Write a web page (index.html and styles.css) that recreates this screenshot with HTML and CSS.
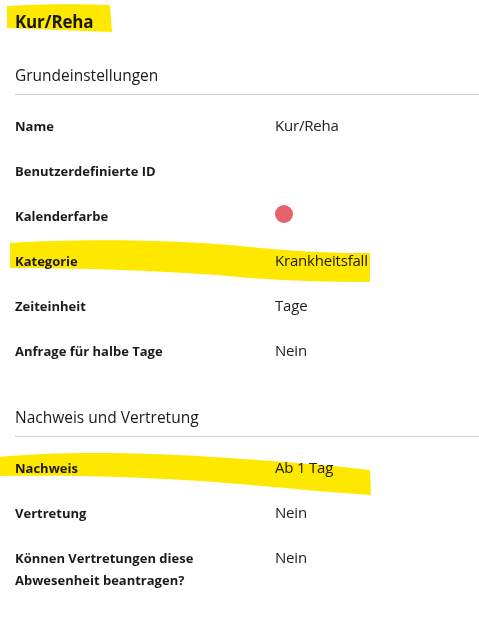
FILE: index.html
```html
<!DOCTYPE html>
<html lang="de">
<head>
<meta charset="utf-8">
<title>Kur/Reha</title>
<link rel="stylesheet" href="styles.css">
</head>
<body>
<div class="page">
  <h1 class="title">Kur/Reha</h1>

  <section class="section">
    <h2 class="section-head">Grundeinstellungen</h2>
    <div class="rows">
      <div class="row"><div class="label">Name</div><div class="value">Kur/Reha</div></div>
      <div class="row"><div class="label">Benutzerdefinierte ID</div><div class="value"></div></div>
      <div class="row"><div class="label">Kalenderfarbe</div><div class="value"><span class="dot"></span></div></div>
      <div class="row"><div class="label">Kategorie</div><div class="value">Krankheitsfall</div></div>
      <div class="row"><div class="label">Zeiteinheit</div><div class="value">Tage</div></div>
      <div class="row"><div class="label">Anfrage für halbe Tage</div><div class="value">Nein</div></div>
    </div>
  </section>

  <section class="section section-2">
    <h2 class="section-head">Nachweis und Vertretung</h2>
    <div class="rows">
      <div class="row"><div class="label">Nachweis</div><div class="value">Ab 1 Tag</div></div>
      <div class="row"><div class="label">Vertretung</div><div class="value">Nein</div></div>
      <div class="row"><div class="label">Können Vertretungen diese Abwesenheit beantragen?</div><div class="value">Nein</div></div>
    </div>
  </section>

  <svg class="marker" width="479" height="617" viewBox="0 0 479 617" aria-hidden="true">
    <path d="M7 6 C40 4 80 4 110 5 L112 32 C80 31 40 29 7 28 Z"/>
    <path d="M10 243 C80 238 190 240 250 247 C300 252 340 253 370 253 L370 282 C330 282 290 281 250 278 C190 272 100 268 10 268 Z"/>
    <path d="M0 457 C60 451 140 452 230 458 C290 462 340 466 370 470 L371 495 C320 492 270 486 200 481 C130 476 60 475 0 476 Z"/>
  </svg>
</div>
</body>
</html>
```

FILE: styles.css
```css
html, body {
  margin: 0;
  padding: 0;
  background: #ffffff;
}

.page {
  position: relative;
  width: 479px;
  min-height: 617px;
  padding: 10px 0 0 15px;
  box-sizing: border-box;
  font-family: "Open Sans", "Noto Sans", "Liberation Sans", sans-serif;
  color: #1b1b1b;
}

.title {
  margin: 0;
  font-size: 17px;
  line-height: 24px;
  font-weight: 700;
  letter-spacing: -0.2px;
}

.section {
  margin-top: 31px;
}

.section-2 {
  margin-top: 33px;
}

.section-head {
  margin: 0;
  padding-bottom: 9px;
  border-bottom: 1px solid #cfcfcf;
  font-size: 15.5px;
  line-height: 20px;
  font-weight: 400;
  letter-spacing: 0;
}

.rows {
  padding-top: 9px;
}

.row {
  display: grid;
  grid-template-columns: 260px 1fr;
  min-height: 45px;
  box-sizing: border-box;
  padding: 11px 0 12px 0;
}

.label {
  font-size: 13px;
  line-height: 22px;
  font-weight: 700;
  max-width: 200px;
  letter-spacing: 0;
}

.value {
  font-size: 15px;
  line-height: 20px;
  font-weight: 400;
  color: #222222;
  letter-spacing: -0.2px;
}

.dot {
  display: block;
  width: 18px;
  height: 18px;
  border-radius: 50%;
  background: #e8626a;
}

.marker {
  position: absolute;
  left: 0;
  top: 0;
  pointer-events: none;
  mix-blend-mode: multiply;
}

.marker path {
  fill: #ffe800;
}
```
